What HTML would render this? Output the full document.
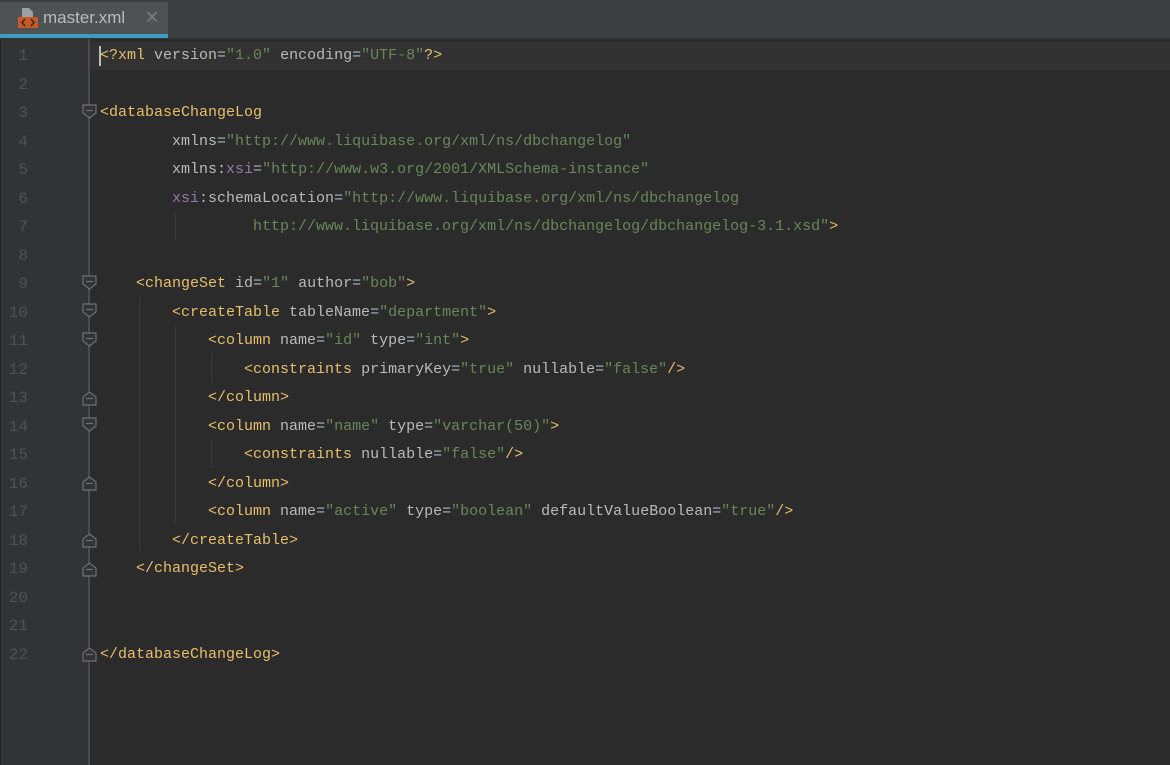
<!DOCTYPE html>
<html><head><style>
body{margin:0;width:1170px;height:765px;background:#2b2b2b;overflow:hidden;position:relative;font-family:"Liberation Mono",monospace}
#tabbar{position:absolute;left:0;top:0;width:1170px;height:38px;background:#3c3f41;border-bottom:1px solid #323232}
#tab{position:absolute;left:0;top:2px;width:168px;height:32px;background:#4e5254}
#ul{position:absolute;left:0;top:34px;width:168px;height:4px;background:#3e9dbf}
#tab .name{position:absolute;left:43px;top:6px;font:17px "Liberation Sans",sans-serif;color:#bbbbbb}
#tab .x{position:absolute;left:145px;top:6px;font:17px "Liberation Sans",sans-serif;color:#7a7d80}
#gutter{position:absolute;left:0;top:39px;width:88px;height:726px;background:#313335;border-left:1px solid #232323}
#sep{position:absolute;left:88px;top:39px;width:2px;height:726px;background:#4a4c4e}
.ln{position:absolute;left:0;width:28px;text-align:right;color:#505355;font-size:16px;line-height:28.5px}
.line{position:absolute;left:100px;white-space:pre;font-size:15px;line-height:28.5px;color:#a9b7c6}
.t{color:#e8bf6a}.a{color:#bababa}.v{color:#6a8759}.n{color:#9876aa}
.g{position:absolute;width:1px;background:#3b3b3b}
</style></head><body>
<div id="tabbar"><div id="tab">
<svg style="position:absolute;left:16px;top:5px" width="24" height="24"><path d="M6 1h7l4 4v5H6z" fill="#9da0a2"/><rect x="2" y="10" width="20" height="11" fill="#c75a24"/><path d="M9 12l-3 3.5 3 3.5M15 12l3 3.5-3 3.5" stroke="#2b2b2b" stroke-width="1.5" fill="none"/></svg>
<span class="name">master.xml</span><span class="x">✕</span></div><div id="ul"></div></div>
<div id="gutter"></div>
<div id="sep"></div>
<div style="position:absolute;left:90px;top:42px;width:1080px;height:28px;background:#323232"></div>
<div style="position:absolute;left:99px;top:46px;width:2px;height:20px;background:#bbbbbb"></div>
<div class="g" style="left:175px;top:212px;height:28px"></div>
<div class="g" style="left:139px;top:298px;height:252px"></div>
<div class="g" style="left:175px;top:326px;height:198px"></div>
<div class="g" style="left:211px;top:354px;height:28px"></div>
<div class="g" style="left:211px;top:440px;height:28px"></div>
<svg style="position:absolute;left:80px;top:100px" width="20" height="580">
<g stroke="#6f7173" fill="#313335" stroke-width="1.2">
<path d="M3 5h13v8l-6.5 5-6.5-5z"/><line x1="6" y1="10.5" x2="13" y2="10.5"/>
<path d="M3 176h13v8l-6.5 5-6.5-5z"/><line x1="6" y1="181.5" x2="13" y2="181.5"/>
<path d="M3 204h13v8l-6.5 5-6.5-5z"/><line x1="6" y1="209.5" x2="13" y2="209.5"/>
<path d="M3 233h13v8l-6.5 5-6.5-5z"/><line x1="6" y1="238.5" x2="13" y2="238.5"/>
<path d="M3 305v-8l6.5-5 6.5 5v8z"/><line x1="6" y1="298.5" x2="13" y2="298.5"/>
<path d="M3 318h13v8l-6.5 5-6.5-5z"/><line x1="6" y1="323.5" x2="13" y2="323.5"/>
<path d="M3 390v-8l6.5-5 6.5 5v8z"/><line x1="6" y1="383.5" x2="13" y2="383.5"/>
<path d="M3 447v-8l6.5-5 6.5 5v8z"/><line x1="6" y1="440.5" x2="13" y2="440.5"/>
<path d="M3 476v-8l6.5-5 6.5 5v8z"/><line x1="6" y1="469.5" x2="13" y2="469.5"/>
<path d="M3 561v-8l6.5-5 6.5 5v8z"/><line x1="6" y1="554.5" x2="13" y2="554.5"/>
</g></svg>
<div style="position:absolute;left:0;top:42px">
<div class="ln" style="top:0">1</div><div class="ln" style="top:28.5px">2</div><div class="ln" style="top:57px">3</div><div class="ln" style="top:85.5px">4</div><div class="ln" style="top:114px">5</div><div class="ln" style="top:142.5px">6</div><div class="ln" style="top:171px">7</div><div class="ln" style="top:199.5px">8</div><div class="ln" style="top:228px">9</div><div class="ln" style="top:256.5px">10</div><div class="ln" style="top:285px">11</div><div class="ln" style="top:313.5px">12</div><div class="ln" style="top:342px">13</div><div class="ln" style="top:370.5px">14</div><div class="ln" style="top:399px">15</div><div class="ln" style="top:427.5px">16</div><div class="ln" style="top:456px">17</div><div class="ln" style="top:484.5px">18</div><div class="ln" style="top:513px">19</div><div class="ln" style="top:541.5px">20</div><div class="ln" style="top:570px">21</div><div class="ln" style="top:598.5px">22</div>
</div>
<div style="position:absolute;left:0;top:42px">
<div class="line" style="top:0"><span class="t">&lt;?xml </span><span class="a">version</span>=<span class="v">"1.0"</span> <span class="a">encoding</span>=<span class="v">"UTF-8"</span><span class="t">?&gt;</span></div>
<div class="line" style="top:57px"><span class="t">&lt;databaseChangeLog</span></div>
<div class="line" style="top:85.5px">        <span class="a">xmlns</span>=<span class="v">"http://www.liquibase.org/xml/ns/dbchangelog"</span></div>
<div class="line" style="top:114px">        <span class="a">xmlns:</span><span class="n">xsi</span>=<span class="v">"http://www.w3.org/2001/XMLSchema-instance"</span></div>
<div class="line" style="top:142.5px">        <span class="n">xsi</span><span class="a">:schemaLocation</span>=<span class="v">"http://www.liquibase.org/xml/ns/dbchangelog</span></div>
<div class="line" style="top:171px"><span class="v">                 http://www.liquibase.org/xml/ns/dbchangelog/dbchangelog-3.1.xsd"</span><span class="t">&gt;</span></div>
<div class="line" style="top:228px">    <span class="t">&lt;changeSet </span><span class="a">id</span>=<span class="v">"1"</span> <span class="a">author</span>=<span class="v">"bob"</span><span class="t">&gt;</span></div>
<div class="line" style="top:256.5px">        <span class="t">&lt;createTable </span><span class="a">tableName</span>=<span class="v">"department"</span><span class="t">&gt;</span></div>
<div class="line" style="top:285px">            <span class="t">&lt;column </span><span class="a">name</span>=<span class="v">"id"</span> <span class="a">type</span>=<span class="v">"int"</span><span class="t">&gt;</span></div>
<div class="line" style="top:313.5px">                <span class="t">&lt;constraints </span><span class="a">primaryKey</span>=<span class="v">"true"</span> <span class="a">nullable</span>=<span class="v">"false"</span><span class="t">/&gt;</span></div>
<div class="line" style="top:342px">            <span class="t">&lt;/column&gt;</span></div>
<div class="line" style="top:370.5px">            <span class="t">&lt;column </span><span class="a">name</span>=<span class="v">"name"</span> <span class="a">type</span>=<span class="v">"varchar(50)"</span><span class="t">&gt;</span></div>
<div class="line" style="top:399px">                <span class="t">&lt;constraints </span><span class="a">nullable</span>=<span class="v">"false"</span><span class="t">/&gt;</span></div>
<div class="line" style="top:427.5px">            <span class="t">&lt;/column&gt;</span></div>
<div class="line" style="top:456px">            <span class="t">&lt;column </span><span class="a">name</span>=<span class="v">"active"</span> <span class="a">type</span>=<span class="v">"boolean"</span> <span class="a">defaultValueBoolean</span>=<span class="v">"true"</span><span class="t">/&gt;</span></div>
<div class="line" style="top:484.5px">        <span class="t">&lt;/createTable&gt;</span></div>
<div class="line" style="top:513px">    <span class="t">&lt;/changeSet&gt;</span></div>
<div class="line" style="top:598.5px"><span class="t">&lt;/databaseChangeLog&gt;</span></div>
</div>
</body></html>
